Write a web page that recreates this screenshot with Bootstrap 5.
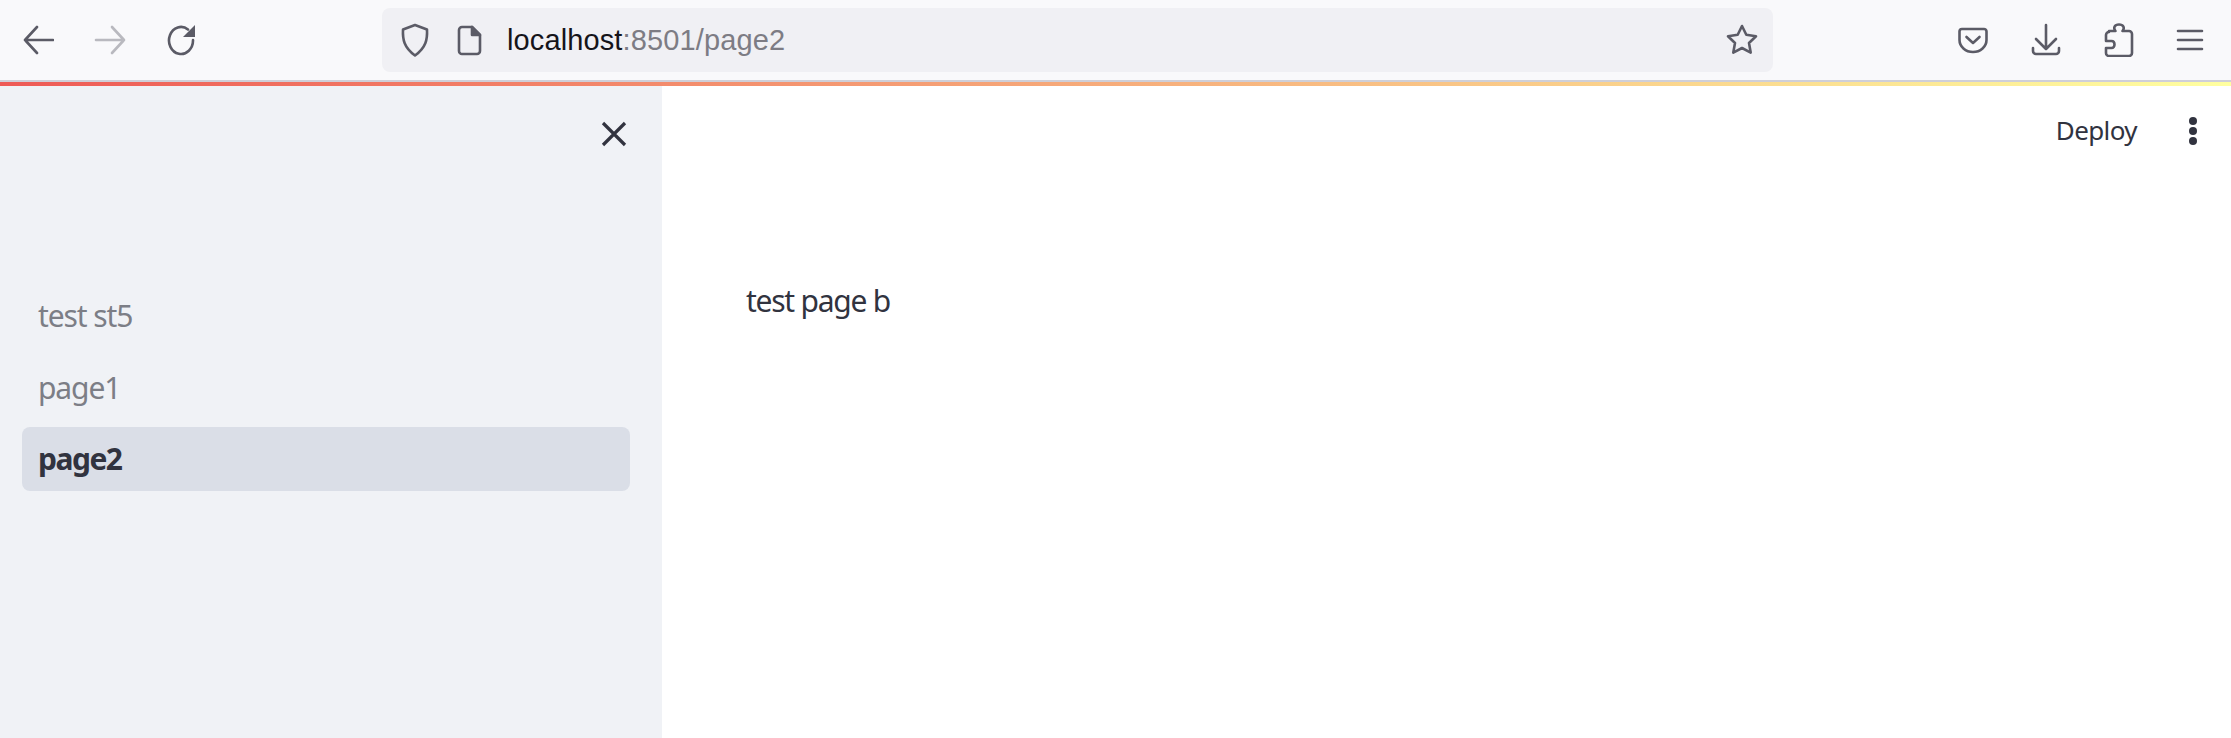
<!doctype html>
<html lang="en"><head><meta charset="utf-8"><title>page2</title>
<link rel="stylesheet" href="https://cdn.jsdelivr.net/npm/bootstrap@5.3.0/dist/css/bootstrap.min.css">
<style>
html,body{height:738px;overflow:hidden}
body{background:#fff;font-family:"Noto Sans",sans-serif;color:#31333f}
.tb{height:80px;background:#f9f9fb;padding-left:22px;padding-right:27px}
.tb svg{display:block;flex:none;fill:none;stroke:#5b5b66;stroke-width:2.6;stroke-linecap:round;stroke-linejoin:round}
.sep{height:2px;background:#cfcfd8}
.grad{height:4px;background:linear-gradient(90deg,#ee5a56,#ffffa0)}
.navgrp{width:360px;gap:40px}
.urlbar{width:1391px;height:64px;margin-top:-1px;background:#f0f0f4;border-radius:8px;padding:0 14px 0 17px}
.urltext{font:29px/1 "Liberation Sans",sans-serif;color:#15141a;margin-left:24px;letter-spacing:.12px;padding-top:2px}
.urltext span{color:#7d7c84}
.tools{gap:42px;margin-left:auto}
.main{height:652px}
.side{width:662px;background:#f0f2f6;padding:0 32px 0 22px}
.closer{height:92px;padding-right:3px;padding-top:4px}
.pagelist{margin-top:106px}
.pg{display:block;height:64px;margin-bottom:8px;padding-left:16px;line-height:64px;font-size:30px;letter-spacing:-1.1px;color:#7c7e86;text-decoration:none;border-radius:8px}
.pg.on{background:#dadee7;color:#31333f;font-weight:700;margin-top:-1px;letter-spacing:-1.5px}
.content{padding:0 33px 0 84px}
.deploybar{height:89px;gap:51px}
.deploy{font-size:26px;letter-spacing:-.6px;color:#31333f}
.body-text{margin-top:105px;font-size:30px;line-height:42px;letter-spacing:-1.25px}
</style></head><body>
<div class="tb d-flex align-items-center">
 <div class="navgrp d-flex align-items-center">
  <svg width="32" height="32" viewBox="0 0 32 32"><path d="M2 16H30M14 3 2 16l12 13" transform="translate(1 0)"/></svg>
  <svg width="32" height="32" viewBox="0 0 32 32" style="opacity:.4"><path d="M2 16H30M18 3l12 13-12 13"/></svg>
  <svg width="32" height="32" viewBox="0 0 32 32"><path d="M27 16a12 13.500 0 1 1-5-10.500"/><path d="M29 1v12H17z" fill="#5b5b66" stroke="none"/></svg>
 </div>
 <div class="urlbar d-flex align-items-center">
  <svg width="32" height="36" viewBox="0 0 32 36"><path d="M16 3 4 7.500c-.5 10 1 18 12 26 11-8 12.500-16 12-26z"/></svg>
  <svg width="26" height="32" viewBox="0 0 26 32" style="margin-left:26px"><path d="M5 3h10l8 8v16a3 3 0 0 1-3 3H5a3 3 0 0 1-3-3V6a3 3 0 0 1 3-3z"/><path d="M15 3v8h8z" fill="#5b5b66"/></svg>
  <div class="urltext">localhost<span>:8501/page2</span></div>
  <svg class="ms-auto" width="34" height="34" viewBox="0 0 34 34"><path d="M17 3l4.300 8.800 9.700 1.400-7 6.800 1.700 9.600-8.700-4.600-8.700 4.600L10 20l-7-6.800 9.700-1.400z"/></svg>
 </div>
 <div class="tools d-flex align-items-center">
  <svg width="30" height="30" viewBox="0 0 30 30"><path d="M4 4h22a2.500 2.500 0 0 1 2.500 2.500V15a13.500 12 0 0 1-27 0V6.500A2.500 2.500 0 0 1 4 4z"/><path d="M8.500 12l6.500 6 6.500-6"/></svg>
  <svg width="32" height="34" viewBox="0 0 32 34"><path d="M16 2v24M6 16l10 10 10-10"/><path d="M3 25v3a3 3 0 0 0 3 3h20a3 3 0 0 0 3-3v-3"/></svg>
  <svg width="30" height="34" viewBox="0 0 30 34"><path d="M5 8h6.500c-2.500-3-1-6.500 3.500-6.500s6 3.500 3.500 6.500H25a3 3 0 0 1 3 3v19a3 3 0 0 1-3 3H5a3 3 0 0 1-3-3v-5h5.500c4 0 4-7 0-7H2v-6a3 3 0 0 1 3-3z"/></svg>
  <svg width="28" height="24" viewBox="0 0 28 24"><path d="M2 3H26M2 12H26M2 21H26"/></svg>
 </div>
</div>
<div class="sep"></div>
<div class="grad"></div>
<div class="main d-flex">
 <aside class="side flex-shrink-0">
  <div class="closer d-flex justify-content-end align-items-center">
   <svg width="26" height="26" viewBox="0 0 26 26" fill="none" stroke="#31333f" stroke-width="3.200"><path d="M2 2l22 22M24 2 2 24"/></svg>
  </div>
  <nav class="pagelist">
   <a class="pg" href="#">test st5</a>
   <a class="pg" href="#">page1</a>
   <a class="pg on" href="#">page2</a>
  </nav>
 </aside>
 <main class="content flex-grow-1">
  <div class="deploybar d-flex justify-content-end align-items-center">
   <span class="deploy">Deploy</span>
   <svg width="10" height="28" viewBox="0 0 10 28" fill="#31333f"><circle cx="5" cy="4" r="4"/><circle cx="5" cy="14" r="4"/><circle cx="5" cy="24" r="4"/></svg>
  </div>
  <p class="body-text">test page b</p>
 </main>
</div>
<script src="https://cdn.jsdelivr.net/npm/bootstrap@5.3.0/dist/js/bootstrap.bundle.min.js"></script>
</body></html>
